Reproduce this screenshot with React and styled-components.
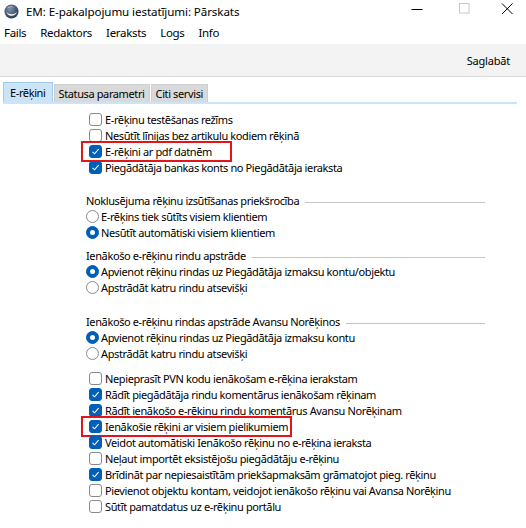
import React from "react";
import styled, { createGlobalStyle } from "styled-components";

const GlobalStyle = createGlobalStyle`
  html, body { margin: 0; padding: 0; background: #ffffff; }
  body { font-family: "Noto Sans", "Open Sans", sans-serif; font-size: 11px; letter-spacing: -0.38px; color: #000; }
  * { box-sizing: border-box; }
`;

const Window = styled.div`
  width: 526px;
  height: 528px;
  background: #ffffff;
  overflow: hidden;
  display: flex;
  flex-direction: column;
`;

const TitleBar = styled.div`
  height: 22px;
  display: flex;
  align-items: center;
  padding-left: 4px;
`;

const TitleText = styled.span`
  margin-left: 7px;
  font-size: 11.6px;
  letter-spacing: -0.1px;
  flex: 1;
`;

const WinButton = styled.div`
  width: ${(p) => p.$w}px;
  height: 22px;
  display: flex;
  align-items: flex-start;
  justify-content: center;
  padding-top: 3px;
`;

const MenuBar = styled.div`
  height: 21px;
  display: flex;
  align-items: center;
  padding-left: 4px;
  font-size: 11.5px;
  letter-spacing: -0.32px;
`;

const MenuItem = styled.span`
  margin-right: ${(p) => p.$mr}px;
`;

const Toolbar = styled.div`
  height: 33px;
  background: #f3f3f3;
  border-bottom: 1px solid #dadada;
  display: flex;
  align-items: center;
  justify-content: flex-end;
  padding-right: 16px;
  margin-top: 1px;
`;

const ToolButton = styled.span`
  letter-spacing: -0.2px;
`;

const TabStrip = styled.div`
  display: flex;
  align-items: flex-end;
  margin: 6px 9px 0 3px;
  border-bottom: 2px solid #cce4f7;
  height: 21px;
`;

const Tab = styled.div`
  height: ${(p) => (p.$active ? 20 : 18)}px;
  padding: 0 ${(p) => p.$px}px;
  display: flex;
  align-items: center;
  background: ${(p) => (p.$active ? "#cce4f7" : "#d9d9d9")};
  border: 1px solid ${(p) => (p.$active ? "#9fcbef" : "#cfcfcf")};
  border-bottom: none;
  margin-right: 1px;
`;

const Content = styled.div`
  padding-left: 86px;
  padding-top: 7px;
  display: flex;
  flex-direction: column;
`;

const Section = styled.div`
  display: flex;
  flex-direction: column;
  margin-top: ${(p) => p.$mt || 0}px;
`;

const Row = styled.div`
  height: 16px;
  display: flex;
  align-items: center;
  position: relative;
  padding-left: ${(p) => (p.$radio ? 0 : 3)}px;
  white-space: nowrap;
`;

const Highlight = styled.div`
  position: absolute;
  left: -5px;
  top: -2px;
  width: ${(p) => p.$w}px;
  height: 21px;
  border: 2px solid #e3151b;
  pointer-events: none;
`;

const Box = styled.span`
  width: 13px;
  height: 13px;
  border-radius: 3px;
  flex: none;
  margin-right: 3px;
  display: flex;
  align-items: center;
  justify-content: center;
  background: ${(p) => (p.$checked ? "#005fb8" : "#ffffff")};
  border: 1px solid ${(p) => (p.$checked ? "#005fb8" : "#8a8a8a")};
`;

const Radio = styled.span`
  width: 13px;
  height: 13px;
  border-radius: 50%;
  flex: none;
  margin-right: 2px;
  display: flex;
  align-items: center;
  justify-content: center;
  background: ${(p) => (p.$checked ? "#005fb8" : "#ffffff")};
  border: 1px solid ${(p) => (p.$checked ? "#005fb8" : "#8a8a8a")};
  &::after {
    content: "";
    display: ${(p) => (p.$checked ? "block" : "none")};
    width: 5px;
    height: 5px;
    border-radius: 50%;
    background: #ffffff;
  }
`;

const GroupLabel = styled.div`
  height: 16px;
  display: flex;
  align-items: center;
  width: 399px;
  white-space: nowrap;
  &::after {
    content: "";
    flex: 1;
    height: 1px;
    background: #c4c4c4;
    margin-left: 6px;
    margin-top: 4px;
  }
`;

const Check = ({ checked, label, hl }) => (
  <Row>
    <Box $checked={checked}>
      {checked && (
        <svg width="9" height="9" viewBox="0 0 9 9">
          <path d="M1.5 4.8 L3.6 6.8 L7.6 2.2" fill="none" stroke="#ffffff" strokeWidth="1.1" />
        </svg>
      )}
    </Box>
    {label}
    {hl && <Highlight $w={hl} />}
  </Row>
);

const Opt = ({ checked, label }) => (
  <Row $radio>
    <Radio $checked={checked} />
    {label}
  </Row>
);

const Logo = () => (
  <svg width="15" height="15" viewBox="0 0 16 16">
    <defs>
      <radialGradient id="lg" cx="0.4" cy="0.35" r="0.7">
        <stop offset="0" stopColor="#7d93aa" />
        <stop offset="1" stopColor="#1f3550" />
      </radialGradient>
    </defs>
    <circle cx="8" cy="8" r="7.5" fill="url(#lg)" />
    <path d="M2.2 7.5 C4 11.5 10 12.5 14 8.2 C12 13.8 4.2 14.6 2.2 7.5 Z" fill="#ffffff" />
    <path d="M4 3.5 C6 2 9.5 2.2 11.5 4 C9 3.2 6.2 3.3 4 5 Z" fill="#c9d3de" opacity="0.7" />
  </svg>
);

export default function App() {
  return (
    <>
      <GlobalStyle />
      <Window>
        <TitleBar>
          <Logo />
          <TitleText>EM: E-pakalpojumu iestatījumi: Pārskats</TitleText>
          <WinButton $w={46}>
            <svg width="12" height="12" viewBox="0 0 12 12">
              <path d="M0.5 6.5 H11.5" stroke="#000" strokeWidth="1" />
            </svg>
          </WinButton>
          <WinButton $w={48}>
            <svg width="12" height="12" viewBox="0 0 12 12">
              <rect x="1.5" y="0.5" width="9.5" height="9.5" fill="none" stroke="#c8c8c8" strokeWidth="1" />
            </svg>
          </WinButton>
          <WinButton $w={38}>
            <svg width="12" height="12" viewBox="0 0 12 12">
              <path d="M1 0.5 L11.5 11 M11.5 0.5 L1 11" stroke="#000" strokeWidth="1" />
            </svg>
          </WinButton>
        </TitleBar>
        <MenuBar>
          <MenuItem $mr={14}>Fails</MenuItem>
          <MenuItem $mr={14}>Redaktors</MenuItem>
          <MenuItem $mr={14}>Ieraksts</MenuItem>
          <MenuItem $mr={14}>Logs</MenuItem>
          <MenuItem $mr={0}>Info</MenuItem>
        </MenuBar>
        <Toolbar>
          <ToolButton>Saglabāt</ToolButton>
        </Toolbar>
        <TabStrip>
          <Tab $active $px={6}>E-rēķini</Tab>
          <Tab $px={4}>Statusa parametri</Tab>
          <Tab $px={4}>Citi servisi</Tab>
        </TabStrip>
        <Content>
          <Section>
            <Check label="E-rēķinu testēšanas režīms" />
            <Check label="Nesūtīt līnijas bez artikulu kodiem rēķinā" />
            <Check checked label="E-rēķini ar pdf datnēm" hl={151} />
            <Check checked label="Piegādātāja bankas konts no Piegādātāja ieraksta" />
          </Section>
          <Section $mt={17}>
            <GroupLabel>Noklusējuma rēķinu izsūtīšanas priekšrocība</GroupLabel>
            <Opt label="E-rēķins tiek sūtīts visiem klientiem" />
            <Opt checked label="Nesūtīt automātiski visiem klientiem" />
          </Section>
          <Section $mt={7}>
            <GroupLabel>Ienākošo e-rēķinu rindu apstrāde</GroupLabel>
            <Opt checked label="Apvienot rēķinu rindas uz Piegādātāja izmaksu kontu/objektu" />
            <Opt label="Apstrādāt katru rindu atsevišķi" />
          </Section>
          <Section $mt={18}>
            <GroupLabel>Ienākošo e-rēķinu rindas apstrāde Avansu Norēķinos</GroupLabel>
            <Opt checked label="Apvienot rēķinu rindas uz Piegādātāja izmaksu kontu" />
            <Opt label="Apstrādāt katru rindu atsevišķi" />
          </Section>
          <Section $mt={9}>
            <Check label="Nepieprasīt PVN kodu ienākošam e-rēķina ierakstam" />
            <Check checked label="Rādīt piegādātāja rindu komentārus ienākošam rēķinam" />
            <Check checked label="Rādīt ienākošo e-rēķinu rindu komentārus Avansu Norēķinam" />
            <Check checked label="Ienākošie rēķini ar visiem pielikumiem" hl={211} />
            <Check checked label="Veidot automātiski Ienākošo rēķinu no e-rēķina ieraksta" />
            <Check label="Neļaut importēt eksistējošu piegādātāju e-rēķinu" />
            <Check checked label="Brīdināt par nepiesaistītām priekšapmaksām grāmatojot pieg. rēķinu" />
            <Check label="Pievienot objektu kontam, veidojot ienākošo rēķinu vai Avansa Norēķinu" />
            <Check label="Sūtīt pamatdatus uz e-rēķinu portālu" />
          </Section>
        </Content>
      </Window>
    </>
  );
}
